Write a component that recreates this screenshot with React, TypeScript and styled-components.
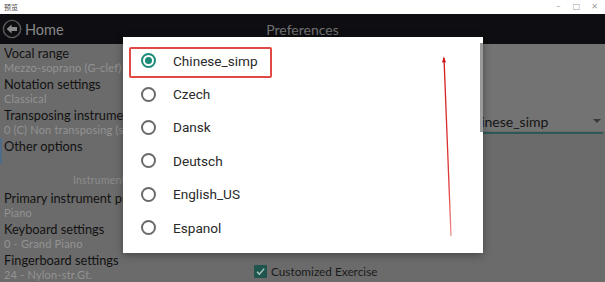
import React, { FC } from 'react';
import styled, { createGlobalStyle } from 'styled-components';

const GlobalStyle = createGlobalStyle`
  html, body {
    margin: 0;
    padding: 0;
    width: 605px;
    height: 282px;
    overflow: hidden;
    background: #6b6b6b;
    font-family: Lato, "Noto Sans", sans-serif;
  }
`;

const languages = ['Chinese_simp', 'Czech', 'Dansk', 'Deutsch', 'English_US', 'Espanol'];

type Setting = { title: string; sub?: string };

const topSettings: Setting[] = [
  { title: 'Vocal range', sub: 'Mezzo-soprano (G-clef)' },
  { title: 'Notation settings', sub: 'Classical' },
  { title: 'Transposing instrument', sub: '0 (C) Non transposing (standard)' },
];

const instrumentSettings: Setting[] = [
  { title: 'Primary instrument preset', sub: 'Piano' },
  { title: 'Keyboard settings', sub: '0 - Grand Piano' },
  { title: 'Fingerboard settings', sub: '24 - Nylon-str.Gt.' },
];

const App: FC = () => (
  <>
    <GlobalStyle />
    <Screen>
      <TitleBar>
        <WindowTitle>预览</WindowTitle>
        <WindowControls>
          <WinButton>–</WinButton>
          <WinButton>□</WinButton>
          <WinButton>✕</WinButton>
        </WindowControls>
      </TitleBar>
      <AppBar>
        <BackButton>
          <BackIcon />
          <span>Home</span>
        </BackButton>
        <BarTitle>Preferences</BarTitle>
      </AppBar>
      <Body>
        <LeftColumn>
          {topSettings.map((s) => (
            <SettingRow key={s.title}>
              <SettingTitle>{s.title}</SettingTitle>
              <SettingSub>{s.sub}</SettingSub>
            </SettingRow>
          ))}
          <OptionRow>
            <SettingTitle>Other options</SettingTitle>
          </OptionRow>
          <SectionHeader>Instruments</SectionHeader>
          {instrumentSettings.map((s) => (
            <SettingRow key={s.title}>
              <SettingTitle>{s.title}</SettingTitle>
              <SettingSub>{s.sub}</SettingSub>
            </SettingRow>
          ))}
        </LeftColumn>
        <RightColumn>
          <LanguagePanel>
            <Dropdown>
              <DropdownValue>Chinese_simp</DropdownValue>
              <DropdownArrow />
            </Dropdown>
          </LanguagePanel>
          <CheckRow>
            <CheckBox>
              <svg width="11" height="11" viewBox="0 0 11 11">
                <path d="M2 5.8 L4.4 8.2 L9.2 2.6" fill="none" stroke="#a9cdc4" strokeWidth="1.4" />
              </svg>
            </CheckBox>
            <CheckLabel>Customized Exercise</CheckLabel>
          </CheckRow>
        </RightColumn>
      </Body>
      <Dialog>
        <LanguageList>
          {languages.map((lang, i) => (
            <LanguageRow key={lang}>
              <Radio $checked={i === 0} />
              <LanguageName>{lang}</LanguageName>
            </LanguageRow>
          ))}
        </LanguageList>
        <ScrollThumb />
        <Highlight />
        <Annotation width="20" height="190" viewBox="0 0 20 190">
          <defs>
            <linearGradient id="arrowFade" x1="0" y1="0" x2="0" y2="1">
              <stop offset="0" stopColor="#d01818" />
              <stop offset="0.7" stopColor="#e03a3a" />
              <stop offset="1" stopColor="#ee9090" />
            </linearGradient>
          </defs>
          <path d="M5 4 L12 182" stroke="url(#arrowFade)" strokeWidth="1.3" fill="none" />
          <path d="M3 8.5 L4.8 2.5 L7 8.3 Z" fill="#d01818" />
        </Annotation>
      </Dialog>
    </Screen>
  </>
);

const BackIcon: FC = () => (
  <svg width="20" height="20" viewBox="0 0 20 20">
    <circle cx="10" cy="10" r="8.6" fill="none" stroke="#5a5a5a" strokeWidth="1.4" />
    <path d="M4.6 10 L9.6 5.4 L9.6 8 L15 8 L15 12 L9.6 12 L9.6 14.6 Z" fill="#8a8a8a" />
  </svg>
);

const Screen = styled.div`
  position: relative;
  width: 605px;
  height: 282px;
  display: flex;
  flex-direction: column;
  background: #6b6b6b;
  overflow: hidden;
`;

const TitleBar = styled.div`
  height: 14px;
  flex: none;
  background: #ffffff;
  display: flex;
  align-items: center;
  justify-content: space-between;
  padding: 0 4px;
`;

const WindowTitle = styled.span`
  font-family: "Noto Sans CJK SC", sans-serif;
  font-size: 7px;
  color: #444;
  line-height: 14px;
`;

const WindowControls = styled.div`
  display: flex;
  gap: 9px;
  padding-right: 2px;
`;

const WinButton = styled.span`
  font-family: "DejaVu Sans", sans-serif;
  font-size: 8px;
  color: #a0a0a0;
  width: 9px;
  text-align: center;
  line-height: 12px;
`;

const AppBar = styled.div`
  position: relative;
  height: 30px;
  flex: none;
  background: #0e0e12;
  display: flex;
  align-items: center;
  padding-left: 2px;
`;

const BackButton = styled.div`
  display: flex;
  align-items: center;
  gap: 3px;
  font-size: 14.5px;
  color: #878787;
`;

const BarTitle = styled.div`
  position: absolute;
  left: 0;
  right: 0;
  text-align: center;
  font-size: 14px;
  color: #707070;
  pointer-events: none;
`;

const Body = styled.div`
  flex: 1;
  display: grid;
  grid-template-columns: 250px 1fr;
`;

const LeftColumn = styled.div`
  display: flex;
  flex-direction: column;
  padding-top: 1px;
  overflow: hidden;
`;

const SettingRow = styled.div`
  padding: 0 0 2px 4px;
  white-space: nowrap;
`;

const SettingTitle = styled.div`
  font-size: 12.8px;
  line-height: 16px;
  color: #121212;
`;

const SettingSub = styled.div`
  font-size: 11px;
  line-height: 13px;
  letter-spacing: 0.2px;
  color: #939393;
`;

const OptionRow = styled.div`
  height: 26px;
  padding-left: 2px;
  border-left: 2px solid #4f6b88;
`;

const SectionHeader = styled.div`
  font-size: 10.5px;
  line-height: 14px;
  letter-spacing: 0.2px;
  color: #8c8c8c;
  padding: 9px 0 3px 73px;
  white-space: nowrap;
`;

const RightColumn = styled.div`
  display: flex;
  flex-direction: column;
  justify-content: space-between;
`;

const LanguagePanel = styled.div`
  height: 87px;
  background: #737373;
  display: flex;
  align-items: flex-end;
  justify-content: flex-end;
  padding-right: 2px;
`;

const Dropdown = styled.div`
  width: 139px;
  height: 24px;
  margin-bottom: -3px;
  display: flex;
  align-items: center;
  justify-content: space-between;
  border-bottom: 2px solid #2e5856;
  box-sizing: border-box;
`;

const DropdownValue = styled.span`
  font-size: 14px;
  color: #151515;
`;

const DropdownArrow = styled.span`
  width: 0;
  height: 0;
  border-left: 4px solid transparent;
  border-right: 4px solid transparent;
  border-top: 4px solid #3a3a3a;
  margin-right: 2px;
`;

const CheckRow = styled.div`
  display: flex;
  align-items: center;
  gap: 4px;
  padding: 0 0 4px 4px;
`;

const CheckBox = styled.span`
  width: 13px;
  height: 13px;
  border-radius: 1px;
  background: #1f554c;
  display: flex;
  align-items: center;
  justify-content: center;
`;

const CheckLabel = styled.span`
  font-size: 11.8px;
  color: #1a1a1a;
`;

const Dialog = styled.div`
  position: absolute;
  left: 123px;
  top: 37px;
  width: 360px;
  height: 216px;
  background: #ffffff;
  box-shadow: 0 2px 8px rgba(0, 0, 0, 0.35);
`;

const LanguageList = styled.div`
  display: flex;
  flex-direction: column;
  padding-top: 7px;
`;

const LanguageRow = styled.div`
  height: 33.4px;
  display: flex;
  align-items: center;
  padding-left: 18px;
  gap: 17px;
`;

const Radio = styled.span<{ $checked: boolean }>`
  width: 15px;
  height: 15px;
  box-sizing: border-box;
  border-radius: 50%;
  border: 2px solid ${(p) => (p.$checked ? '#1b8a76' : '#6a6a6a')};
  display: flex;
  align-items: center;
  justify-content: center;
  &::after {
    content: '';
    width: 7px;
    height: 7px;
    border-radius: 50%;
    background: #1b8a76;
    display: ${(p) => (p.$checked ? 'block' : 'none')};
  }
`;

const LanguageName = styled.span`
  font-family: Roboto, sans-serif;
  font-size: 13.6px;
  color: #2a2a2a;
`;

const ScrollThumb = styled.div`
  position: absolute;
  right: 0;
  top: 6px;
  width: 3px;
  height: 89px;
  background: #9a9a9a;
`;

const Highlight = styled.div`
  position: absolute;
  left: 6px;
  top: 10px;
  width: 143px;
  height: 31px;
  box-sizing: border-box;
  border: 2px solid #e04a42;
  border-radius: 2px;
`;

const Annotation = styled.svg`
  position: absolute;
  left: 316px;
  top: 17px;
`;

export default App;
